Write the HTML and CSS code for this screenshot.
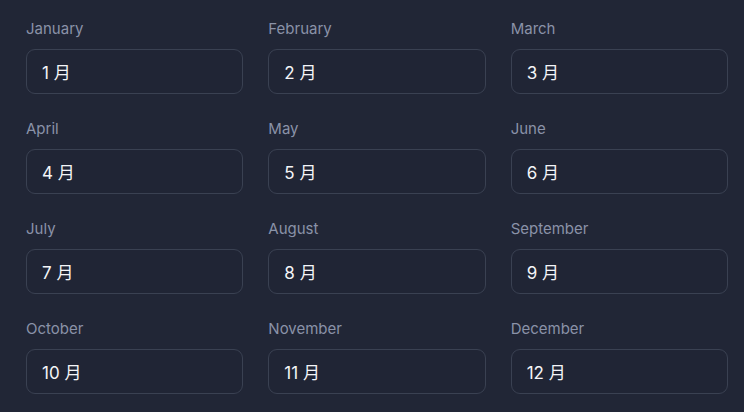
FILE: index.html
```html
<!DOCTYPE html>
<html lang="ja">
<head>
  <meta charset="UTF-8">
  <title>Months</title>
  <link rel="stylesheet" href="styles.css">
</head>
<body>

<div class="month-grid">
  <div class="field"><label>January</label><div class="box">1 月</div></div>
  <div class="field"><label>February</label><div class="box">2 月</div></div>
  <div class="field"><label>March</label><div class="box">3 月</div></div>
  <div class="field"><label>April</label><div class="box">4 月</div></div>
  <div class="field"><label>May</label><div class="box">5 月</div></div>
  <div class="field"><label>June</label><div class="box">6 月</div></div>
  <div class="field"><label>July</label><div class="box">7 月</div></div>
  <div class="field"><label>August</label><div class="box">8 月</div></div>
  <div class="field"><label>September</label><div class="box">9 月</div></div>
  <div class="field"><label>October</label><div class="box">10 月</div></div>
  <div class="field"><label>November</label><div class="box">11 月</div></div>
  <div class="field"><label>December</label><div class="box">12 月</div></div>
</div>

</body>
</html>
```

FILE: styles.css
```css
  body {
    margin: 0;
    font-family: Inter, "Noto Sans CJK JP", sans-serif;
    background: #212636;
    padding: 19px 16px 0 26px;
  }
  .month-grid {
    display: grid;
    grid-template-columns: repeat(3, 1fr);
    column-gap: 25px;
    row-gap: 25px;
  }
  .field label {
    display: block;
    font-size: 15px;
    line-height: 20px;
    color: #8a92a8;
    margin-bottom: 10px;
  }
  .box {
    height: 45px;
    box-sizing: border-box;
    border: 1px solid #3a4152;
    border-radius: 9px;
    background: #202535;
    padding: 0 15px;
    display: flex;
    align-items: center;
    color: #f4f5f8;
    font-size: 17px;
  }
```
